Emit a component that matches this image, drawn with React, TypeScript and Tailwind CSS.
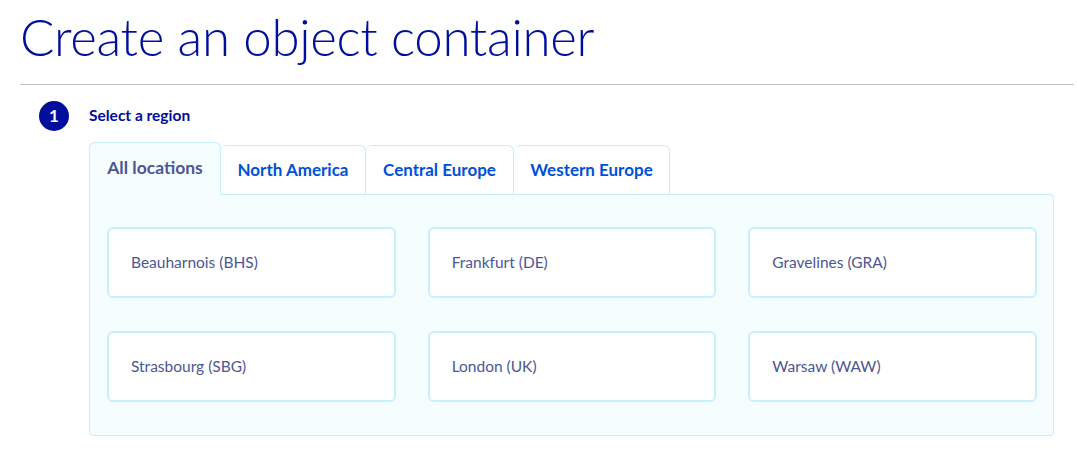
const tabs = [
    { label: "All locations", w: "w-[132px]" },
    { label: "North America", w: "w-[145px]" },
    { label: "Central Europe", w: "w-[148px]" },
    { label: "Western Europe", w: "w-[156px]" },
];

const regions = [
    "Beauharnois (BHS)",
    "Frankfurt (DE)",
    "Gravelines (GRA)",
    "Strasbourg (SBG)",
    "London (UK)",
    "Warsaw (WAW)",
];

const App = () => {
    return (
        <div className="min-h-screen bg-white pl-[20px] pr-[3px] font-['Lato','Noto_Sans',sans-serif]">
            <h1 className="pt-[5px] h-[84px] text-[51px] font-light leading-[64px] text-[#000e9c] tracking-[-0.3px]">
                Create an object container
            </h1>
            <div className="h-px bg-[#c4c4c4]" />

            <div className="flex items-center mt-[16px] h-[30px] pl-[19px]">
                <span className="flex items-center justify-center w-[30px] h-[30px] rounded-full bg-[#000e9c] text-white text-[17px] font-bold">
                    1
                </span>
                <span className="ml-[20px] text-[15.5px] font-bold text-[#000e9c]">Select a region</span>
            </div>

            <div className="ml-[69px] mt-[11px] w-[965px]">
                <div className="flex items-end">
                    {tabs.map((t, i) =>
                        i === 0 ? (
                            <div
                                key={t.label}
                                className={`${t.w} relative z-10 -mb-px h-[53px] flex items-center justify-center pb-[2px] bg-[#f5fdff] border border-b-0 border-[#c2effb] rounded-t-[6px] text-[17.5px] font-bold text-[#4d5694]`}
                            >
                                {t.label}
                            </div>
                        ) : (
                            <div
                                key={t.label}
                                className={`${t.w} h-[49px] flex items-center justify-center bg-white border border-l-0 border-[#c2effb] border-b-0 rounded-t-[6px] text-[17px] font-bold text-[#0050d7]`}
                            >
                                {t.label}
                            </div>
                        )
                    )}
                </div>
                <div className="h-[242px] bg-[#f5fdff] border border-[#c2effb] rounded-b-[4px] rounded-tr-[4px] pl-[17px] pr-[16px] pt-[32px]">
                    <div className="grid grid-cols-3 gap-x-[32px] gap-y-[33px]">
                        {regions.map((r) => (
                            <div
                                key={r}
                                className="h-[71px] flex items-center pl-[22px] bg-white border-2 border-[#c6f1fd] rounded-[6px] text-[15.5px] text-[#4d5694]"
                            >
                                {r}
                            </div>
                        ))}
                    </div>
                </div>
            </div>
        </div>
    );
};

export default App;
